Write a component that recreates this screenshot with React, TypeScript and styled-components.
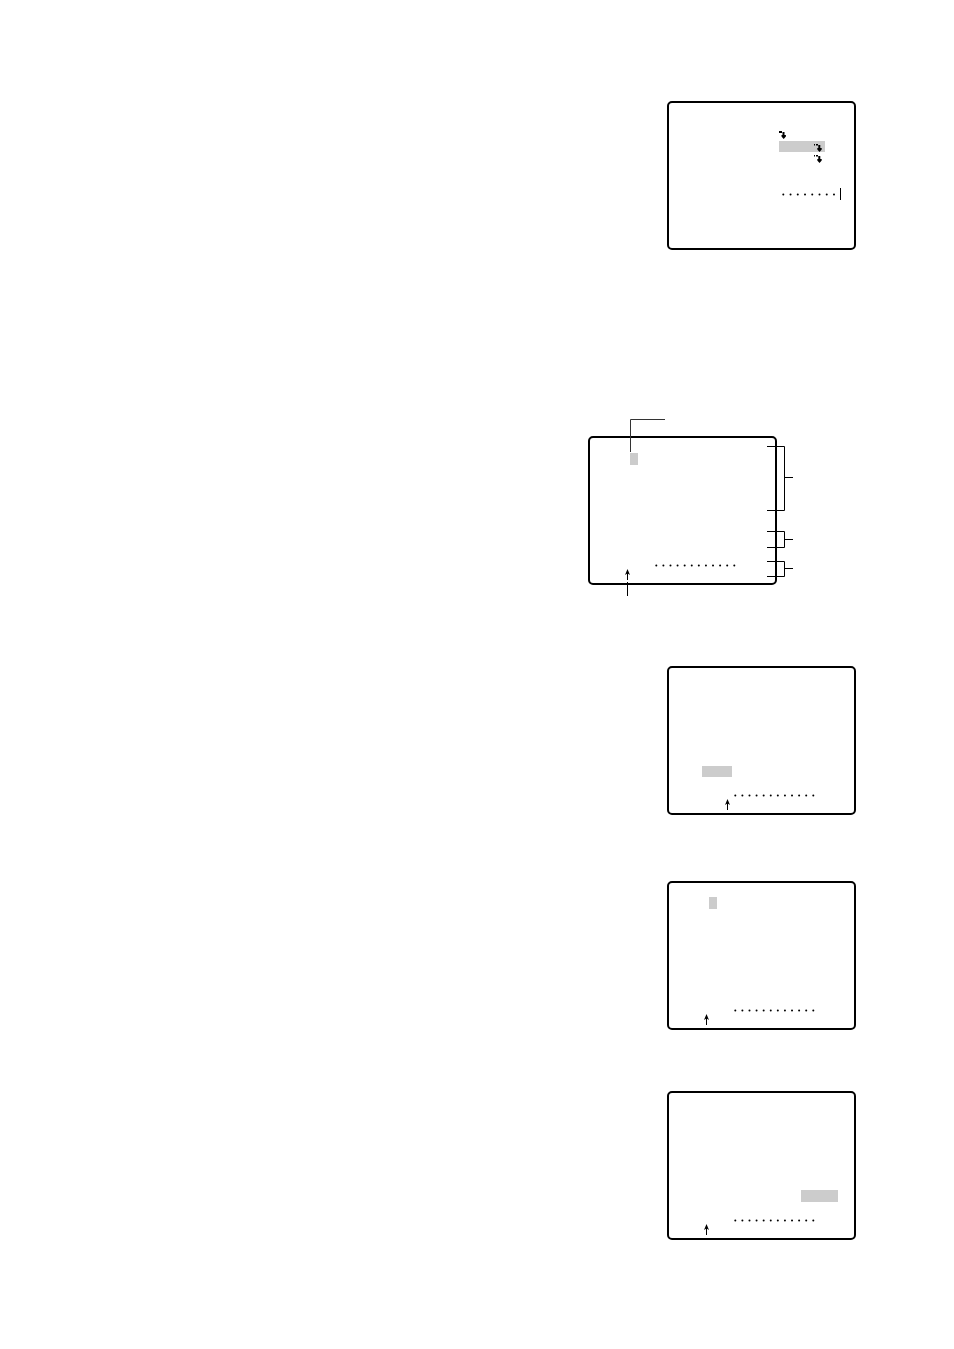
import React from "react";
import styled, { createGlobalStyle } from "styled-components";

const GlobalStyle = createGlobalStyle`
  body {
    margin: 0;
    background: #fff;
    font-family: "Liberation Sans", Arial, sans-serif;
  }
`;

const Page = styled.main`
  display: flex;
  flex-direction: column;
  align-items: flex-end;
  padding: 101px 98px 109px 24px;
`;

const Figure = styled.figure<{ $before?: number; $right?: number }>`
  position: relative;
  margin: ${(p) => p.$before ?? 0}px ${(p) => p.$right ?? 0}px 0 0;
`;

const Screen = styled.div`
  box-sizing: border-box;
  display: flex;
  flex-direction: column;
  width: 189px;
  height: 149px;
  padding-bottom: 3px;
  border: 2px solid #000;
  border-radius: 5px;
`;

const Row = styled.div<{ $indent: number; $before?: number }>`
  display: flex;
  align-items: center;
  padding-left: ${(p) => p.$indent}px;
  margin-top: ${(p) => p.$before ?? 0}px;
`;

const Highlight = styled.div<{ $width: number }>`
  box-sizing: border-box;
  width: ${(p) => p.$width}px;
  height: 12px;
  background: #ccc;
`;

const SubmenuCell = styled(Highlight)<{ $plain?: boolean }>`
  display: flex;
  align-items: flex-end;
  justify-content: flex-end;
  height: 11px;
  padding-right: 3px;
  background: ${(p) => (p.$plain ? "transparent" : "#ccc")};
`;

const Footer = styled.div`
  margin-top: auto;
`;

const Drawing = styled.svg`
  display: block;
  flex: none;
`;

const Callouts = styled(Drawing)`
  position: absolute;
  left: 0;
  top: -20px;
`;

function SubmenuArrow({ dashed = false }: { dashed?: boolean }) {
  return (
    <Drawing width="8" height="8" viewBox="0 0 8 8" aria-hidden="true">
      {dashed ? (
        <path d="M0 0h1v1.500H0zM2 0h2v1.500H2z" />
      ) : (
        <path d="M0 0h3v2H0z" />
      )}
      {dashed ? (
        <path d="M4.300 1H6.300V4H7.700V5.500L5.500 8 3.300 5.500V4H4.300z" />
      ) : (
        <path d="M3.500 1H5.500V4H6.900V5.500L4.700 8 2.500 5.500V4H3.500z" />
      )}
    </Drawing>
  );
}

function Dots({ count, step }: { count: number; step: number }) {
  return (
    <Drawing width={count * 8} height="3" aria-hidden="true">
      {Array.from({ length: count }, (_, i) => (
        <circle key={i} cx={1.3 + i * step} cy="1.5" r="1" />
      ))}
    </Drawing>
  );
}

function UpArrow() {
  return (
    <Drawing width="5" height="11" viewBox="0 0 5 11" aria-hidden="true">
      <path d="M2.500 0 5 6 3 4.800V11H2V4.800L0 6z" />
    </Drawing>
  );
}

function ScreenFooter({ arrow }: { arrow: number }) {
  return (
    <Footer>
      <Row $indent={65}>
        <Dots count={12} step={7.09} />
      </Row>
      <Row $indent={arrow} $before={2}>
        <UpArrow />
      </Row>
    </Footer>
  );
}

export default function App() {
  return (
    <Page>
      <GlobalStyle />
      <Figure aria-label="Submenu screen">
        <Screen>
          <Row $indent={110} $before={28}>
            <SubmenuArrow />
          </Row>
          <Row $indent={110} $before={2}>
            <SubmenuCell $width={46}>
              <SubmenuArrow dashed />
            </SubmenuCell>
          </Row>
          <Row $indent={110}>
            <SubmenuCell $width={46} $plain>
              <SubmenuArrow dashed />
            </SubmenuCell>
          </Row>
          <Row $indent={112} $before={25}>
            <Drawing width="60" height="12" aria-hidden="true">
              {Array.from({ length: 8 }, (_, i) => (
                <circle key={i} cx={2.3 + i * 7.24} cy="6.4" r="1" />
              ))}
              <path d="M59 0h1v12h-1z" />
            </Drawing>
          </Row>
        </Screen>
      </Figure>

      <Figure $before={186} $right={79} aria-label="Screen areas">
        <Screen>
          <Row $indent={40} $before={15}>
            <Highlight $width={8} />
          </Row>
          <ScreenFooter arrow={35} />
        </Screen>
        <Callouts width="208" height="182" aria-hidden="true">
          <g fill="none" stroke="#000" strokeWidth="1">
            <path d="M42.500 36V3.500H77" stroke="#333" />
            <path d="M179 30.500H196.500V94.500H179M197 61.500H205" />
            <path d="M179 115.500H196.500V131.500H179M197 123.500H205" />
            <path d="M179 145.500H196.500V160.500H179M197 152.500H205" />
            <path d="M39.500 166V180" />
          </g>
        </Callouts>
      </Figure>

      <Figure $before={81} aria-label="Lower left selection">
        <Screen>
          <Row $indent={33} $before={98}>
            <SubmenuCell $width={30} />
          </Row>
          <ScreenFooter arrow={56} />
        </Screen>
      </Figure>

      <Figure $before={66} aria-label="Character selection">
        <Screen>
          <Row $indent={40} $before={14}>
            <Highlight $width={8} />
          </Row>
          <ScreenFooter arrow={35} />
        </Screen>
      </Figure>

      <Figure $before={61} aria-label="Lower right selection">
        <Screen>
          <Row $indent={132} $before={97}>
            <Highlight $width={37} />
          </Row>
          <ScreenFooter arrow={35} />
        </Screen>
      </Figure>
    </Page>
  );
}
